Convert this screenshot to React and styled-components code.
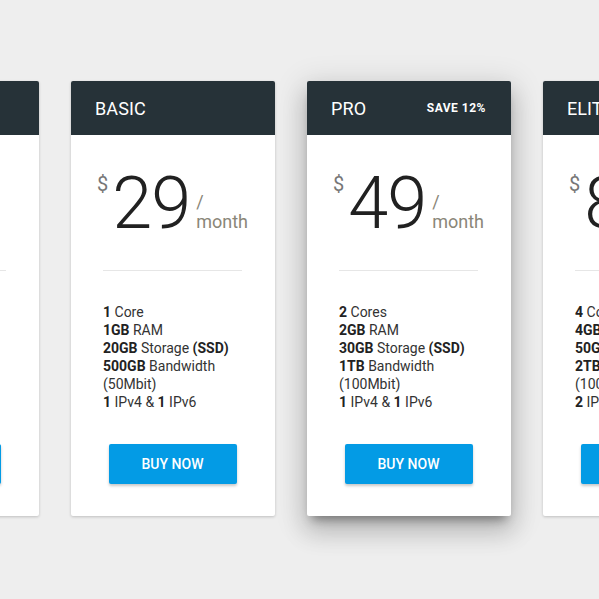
import styled, { createGlobalStyle } from "styled-components";

const GlobalStyle = createGlobalStyle`
  html, body {
    margin: 0;
    padding: 0;
    background: #eeeeee;
    font-family: Roboto, "Liberation Sans", Arial, sans-serif;
  }
`;

const Page = styled.div`
  width: 599px;
  height: 599px;
  overflow: hidden;
  background: #eeeeee;
  padding-top: 81px;
  box-sizing: border-box;
`;

const Row = styled.div`
  display: flex;
  gap: 32px;
  margin-left: -165px;
`;

const Card = styled.div`
  width: 204px;
  flex-shrink: 0;
  background: #fff;
  border-radius: 2px;
  overflow: hidden;
  display: flex;
  flex-direction: column;
  box-shadow: ${(p) =>
    p.$featured
      ? "0 16px 24px 2px rgba(0,0,0,0.14), 0 6px 30px 5px rgba(0,0,0,0.12), 0 8px 10px -5px rgba(0,0,0,0.4)"
      : "0 1px 3px rgba(0,0,0,0.2)"};
`;

const Header = styled.div`
  height: 54px;
  background: #263238;
  color: #fff;
  display: flex;
  align-items: center;
  justify-content: space-between;
  padding: 0 25px 0 24px;
`;

const Title = styled.h3`
  margin: 0;
  font-size: 18px;
  font-weight: 400;
  letter-spacing: 0.1px;
`;

const Badge = styled.span`
  font-size: 12px;
  font-weight: 700;
  letter-spacing: 0.5px;
`;

const Body = styled.div`
  padding: 33px 33px 32px 32px;
  display: flex;
  flex-direction: column;
`;

const Price = styled.div`
  display: flex;
  justify-content: center;
  height: 72px;
`;

const Currency = styled.span`
  font-size: 20px;
  line-height: 20px;
  color: #777;
  margin: 6px 4px 0 0;
`;

const Amount = styled.span`
  font-size: 72px;
  line-height: 72px;
  font-weight: 300;
  color: #212121;
  letter-spacing: -1px;
`;

const Period = styled.span`
  align-self: flex-end;
  font-size: 18px;
  line-height: 20px;
  color: #8a8678;
  margin: 0 0 8px 6px;
`;

const Divider = styled.hr`
  border: none;
  height: 1px;
  background: #e6e6e6;
  margin: 30px 0 32px;
`;

const Features = styled.ul`
  list-style: none;
  margin: 0;
  padding: 0;
  height: 108px;
  font-size: 14px;
  line-height: 18px;
  color: #333;

  b {
    font-weight: 700;
    color: #222;
  }
`;

const BuyButton = styled.button`
  align-self: center;
  margin-top: 33px;
  width: 128px;
  height: 40px;
  border: none;
  border-radius: 2px;
  background: #039be5;
  color: #fff;
  font-family: inherit;
  font-size: 14px;
  font-weight: 500;
  box-shadow: 0 2px 3px rgba(0, 0, 0, 0.22);
  cursor: pointer;
`;

const plans = [
  {
    name: "STARTER",
    price: 9,
    features: [
      [<b key="a">1</b>, " Core"],
      [<b key="a">512MB</b>, " RAM"],
      [<b key="a">10GB</b>, " Storage ", <b key="b">(SSD)</b>],
      [<b key="a">250GB</b>, " Bandwidth (25Mbit)"],
      [<b key="a">1</b>, " IPv4 & ", <b key="b">1</b>, " IPv6"],
    ],
  },
  {
    name: "BASIC",
    price: 29,
    features: [
      [<b key="a">1</b>, " Core"],
      [<b key="a">1GB</b>, " RAM"],
      [<b key="a">20GB</b>, " Storage ", <b key="b">(SSD)</b>],
      [<b key="a">500GB</b>, " Bandwidth (50Mbit)"],
      [<b key="a">1</b>, " IPv4 & ", <b key="b">1</b>, " IPv6"],
    ],
  },
  {
    name: "PRO",
    price: 49,
    badge: "SAVE 12%",
    featured: true,
    features: [
      [<b key="a">2</b>, " Cores"],
      [<b key="a">2GB</b>, " RAM"],
      [<b key="a">30GB</b>, " Storage ", <b key="b">(SSD)</b>],
      [<b key="a">1TB</b>, " Bandwidth (100Mbit)"],
      [<b key="a">1</b>, " IPv4 & ", <b key="b">1</b>, " IPv6"],
    ],
  },
  {
    name: "ELITE",
    price: 89,
    badge: "SAVE 20%",
    features: [
      [<b key="a">4</b>, " Cores"],
      [<b key="a">4GB</b>, " RAM"],
      [<b key="a">50GB</b>, " Storage ", <b key="b">(SSD)</b>],
      [<b key="a">2TB</b>, " Bandwidth (100Mbit)"],
      [<b key="a">2</b>, " IPv4 & ", <b key="b">2</b>, " IPv6"],
    ],
  },
];

export default function App() {
  return (
    <>
      <GlobalStyle />
      <Page>
        <Row>
          {plans.map((plan) => (
            <Card key={plan.name} $featured={plan.featured}>
              <Header>
                <Title>{plan.name}</Title>
                {plan.badge && <Badge>{plan.badge}</Badge>}
              </Header>
              <Body>
                <Price>
                  <Currency>$</Currency>
                  <Amount>{plan.price}</Amount>
                  <Period>
                    /<br />
                    month
                  </Period>
                </Price>
                <Divider />
                <Features>
                  {plan.features.map((f, i) => (
                    <li key={i}>{f}</li>
                  ))}
                </Features>
                <BuyButton>BUY NOW</BuyButton>
              </Body>
            </Card>
          ))}
        </Row>
      </Page>
    </>
  );
}
